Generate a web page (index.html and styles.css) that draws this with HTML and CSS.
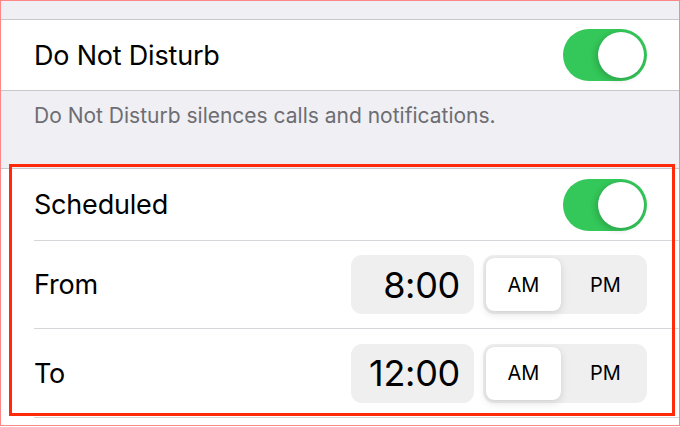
FILE: index.html
```html
<!DOCTYPE html>
<html lang="en">
<head>
<meta charset="utf-8">
<title>Do Not Disturb</title>
<link rel="stylesheet" href="styles.css">
</head>
<body>
<div class="frame">
  <div class="spacer-top"></div>
  <div class="group">
    <div class="row row-dnd">
      <span class="label">Do Not Disturb</span>
      <span class="toggle on"><span class="knob"></span></span>
    </div>
  </div>
  <div class="footer">Do Not Disturb silences calls and notifications.</div>
  <div class="group">
    <div class="row row-sched">
      <span class="label">Scheduled</span>
      <span class="toggle on"><span class="knob"></span></span>
    </div>
    <div class="row row-time">
      <span class="label">From</span>
      <div class="picker">
        <span class="time">8:00</span>
        <div class="seg">
          <span class="seg-item selected">AM</span>
          <span class="seg-item">PM</span>
        </div>
      </div>
    </div>
    <div class="row row-time">
      <span class="label">To</span>
      <div class="picker">
        <span class="time">12:00</span>
        <div class="seg">
          <span class="seg-item selected">AM</span>
          <span class="seg-item">PM</span>
        </div>
      </div>
    </div>
    <div class="row row-rest"></div>
  </div>
  <div class="highlight"></div>
</div>
</body>
</html>
```

FILE: styles.css
```css
* { box-sizing: border-box; }
html, body { margin: 0; padding: 0; background: #ffffff; }
body { font-family: Inter, "Liberation Sans", sans-serif; color: #000; }

.frame {
  position: relative;
  width: 680px;
  height: 426px;
  border: 1px solid #ff8787;
  background: #efeff4;
  overflow: hidden;
}

.spacer-top { height: 18px; }

.group {
  background: #ffffff;
  border-top: 1px solid #c8c7cc;
  border-bottom: 1px solid #c8c7cc;
}

.row {
  display: flex;
  align-items: center;
  justify-content: space-between;
  padding: 0 32px 0 33px;
  position: relative;
}
.row + .row::before {
  content: "";
  position: absolute;
  left: 33px;
  right: 0;
  top: -1px;
  height: 1px;
  background: #d6d6da;
}
.row + .row { margin-top: 1px; }

.row-dnd { height: 70px; }
.row-sched { height: 71px; }
.row-time { height: 87px; padding-right: 32px; }
.row-time + .row-time { height: 88px; }
.row-rest { height: 20px; }

.label {
  font-size: 27px;
  letter-spacing: -0.2px;
}

.footer {
  height: 77px;
  padding: 12px 0 0 33px;
  font-size: 21px;
  line-height: 26px;
  color: #6d6d72;
}

.toggle {
  width: 84px;
  height: 52px;
  border-radius: 26px;
  background: #34c759;
  position: relative;
  display: block;
}
.toggle .knob {
  position: absolute;
  top: 3px;
  right: 3px;
  width: 46px;
  height: 46px;
  border-radius: 50%;
  background: #ffffff;
  box-shadow: -2px 2px 6px rgba(0, 0, 0, 0.18), 0 0 1px rgba(0, 0, 0, 0.1);
}

.picker {
  display: flex;
  gap: 9px;
  align-items: center;
}

.time {
  width: 123px;
  height: 59px;
  border-radius: 11px;
  background: #efeff0;
  display: flex;
  align-items: center;
  justify-content: flex-end;
  padding-right: 14px;
  font-size: 36px;
  letter-spacing: -0.3px;
}

.seg {
  width: 164px;
  height: 59px;
  border-radius: 11px;
  background: #efeff0;
  padding: 3px;
  display: flex;
}
.seg-item {
  flex: 1;
  display: flex;
  align-items: center;
  justify-content: center;
  padding-left: 6px;
  font-size: 20px;
  border-radius: 8px;
}
.seg-item.selected {
  flex: 0 0 75px;
  padding-left: 0;
  background: #ffffff;
  box-shadow: 0 3px 8px rgba(0, 0, 0, 0.12), 0 0 1px rgba(0, 0, 0, 0.15);
}

.highlight {
  position: absolute;
  left: 8px;
  top: 163px;
  width: 666px;
  height: 252px;
  border: 3px solid #ff2a0a;
  pointer-events: none;
}
```
